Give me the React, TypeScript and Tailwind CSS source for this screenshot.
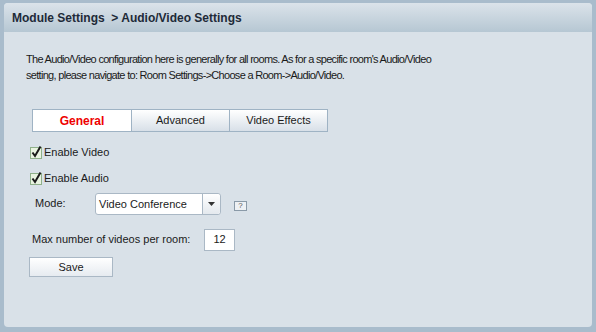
import React from "react";

const font = { fontFamily: '"Liberation Sans", Arial, sans-serif' };

function Check() {
  return (
    <svg width="13" height="14" viewBox="0 0 13 14" className="shrink-0">
      <rect x="0.5" y="2.5" width="11" height="11" fill="#e8f3e0" stroke="#8fb08a" />
      <path d="M2.5 7.5 L5 11 L10.5 1.5" fill="none" stroke="#1a1a1a" strokeWidth="2" />
    </svg>
  );
}

export default function App() {
  return (
    <div className="w-[596px] h-[332px] bg-[#a9bccc] pt-[3px] pl-[4px] pr-[4px] pb-[5px]" style={font}>
      <div className="h-full flex flex-col rounded-[4px] overflow-hidden bg-[#d9e1e8]">
        <div className="h-[29px] shrink-0 bg-gradient-to-b from-[#dbe3ea] to-[#b6c7d3] flex items-center pl-[8px] pt-[1px] text-[12px] font-bold text-[#1e2a38]">
          Module Settings&nbsp;&nbsp;&gt; Audio/Video Settings
        </div>
        <div className="flex-1 pt-[19px] pl-[22px] text-[11px] text-[#1a1a1a]">
          <p className="leading-[16px] w-[480px] tracking-[-0.7px]">
            The Audio/Video configuration here is generally for all rooms. As for a specific room's Audio/Video
            <br />
            setting, please navigate to: Room Settings-&gt;Choose a Room-&gt;Audio/Video.
          </p>
          <div className="mt-[26px] ml-[6px] flex w-[296px] h-[23px] border border-[#9fb3c4]">
            <div className="w-[99px] bg-white flex items-center justify-center font-bold text-[12px] text-[#ee0000] border-r border-[#9fb3c4]">
              General
            </div>
            <div className="w-[98px] bg-gradient-to-b from-white to-[#d8e0e8] flex items-center justify-center text-[11px] border-r border-[#9fb3c4]">
              Advanced
            </div>
            <div className="flex-1 bg-gradient-to-b from-white to-[#d8e0e8] flex items-center justify-center text-[11px]">
              Video Effects
            </div>
          </div>
          <div className="mt-[13px] ml-[4px] flex items-center gap-[1px] h-[14px]">
            <Check />
            <span>Enable Video</span>
          </div>
          <div className="mt-[12px] ml-[4px] flex items-center gap-[1px] h-[14px]">
            <Check />
            <span>Enable Audio</span>
          </div>
          <div className="mt-[8px] flex items-center h-[22px]">
            <span className="ml-[9px] w-[60px] -mt-[2px]">Mode:</span>
            <div className="w-[126px] h-[22px] bg-white border border-[#aab8c5] rounded-[3px] flex">
              <div className="flex-1 flex items-center pl-[3px]">Video Conference</div>
              <div className="w-[18px] border-l border-[#aab8c5] bg-gradient-to-b from-white to-[#e4e9ee] flex items-center justify-center rounded-r-[3px]">
                <svg width="7" height="4" viewBox="0 0 7 4"><path d="M0 0 L7 0 L3.5 4 Z" fill="#333" /></svg>
              </div>
            </div>
            <div className="ml-[13px] mt-[4px] w-[13px] h-[10px] border border-[#8a9aa8] bg-[#eef1f4] flex items-center justify-center text-[8px] leading-none text-[#555]">
              ?
            </div>
          </div>
          <div className="mt-[13px] flex items-center h-[23px]">
            <span className="ml-[6px] w-[172px]">Max number of videos per room:</span>
            <div className="w-[31px] h-[22px] bg-white border border-[#aab8c5] flex items-center justify-center">12</div>
          </div>
          <div className="mt-[6px] ml-[3px] w-[84px] h-[20px] border border-[#aab8c5] bg-gradient-to-b from-white to-[#e6ebf0] flex items-center justify-center">
            Save
          </div>
        </div>
      </div>
    </div>
  );
}
